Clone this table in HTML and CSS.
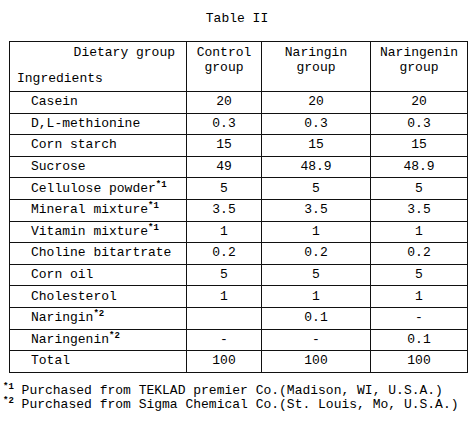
FILE: index.html
```html
<!DOCTYPE html>
<html lang="en">
  <head>
    <meta charset="UTF-8" />
    <meta name="viewport" content="width=device-width, initial-scale=1.0" />
    <title>Table II</title>
    <link rel="stylesheet" href="styles.css">
  </head>
  <body>
    <p class="title">Table II</p>
    <table class="diet">
      <colgroup>
        <col class="col-name" />
        <col class="col-control" />
        <col class="col-naringin" />
        <col class="col-naringenin" />
      </colgroup>
      <thead>
        <tr>
          <th class="corner">
            <span class="corner-top">Dietary group</span>
            <span class="corner-bottom">Ingredients</span>
          </th>
          <th>Control<br />group</th>
          <th>Naringin<br />group</th>
          <th>Naringenin<br />group</th>
        </tr>
      </thead>
      <tbody>
        <tr><td>Casein</td><td>20</td><td>20</td><td>20</td></tr>
        <tr><td>D,L-methionine</td><td>0.3</td><td>0.3</td><td>0.3</td></tr>
        <tr><td>Corn starch</td><td>15</td><td>15</td><td>15</td></tr>
        <tr><td>Sucrose</td><td>49</td><td>48.9</td><td>48.9</td></tr>
        <tr><td>Cellulose powder<sup class="mark">*1</sup></td><td>5</td><td>5</td><td>5</td></tr>
        <tr><td>Mineral mixture<sup class="mark">*1</sup></td><td>3.5</td><td>3.5</td><td>3.5</td></tr>
        <tr><td>Vitamin mixture<sup class="mark">*1</sup></td><td>1</td><td>1</td><td>1</td></tr>
        <tr><td>Choline bitartrate</td><td>0.2</td><td>0.2</td><td>0.2</td></tr>
        <tr><td>Corn oil</td><td>5</td><td>5</td><td>5</td></tr>
        <tr><td>Cholesterol</td><td>1</td><td>1</td><td>1</td></tr>
        <tr><td>Naringin<sup class="mark">*2</sup></td><td></td><td>0.1</td><td>-</td></tr>
        <tr><td>Naringenin<sup class="mark">*2</sup></td><td>-</td><td>-</td><td>0.1</td></tr>
        <tr class="total"><td>Total</td><td>100</td><td>100</td><td>100</td></tr>
      </tbody>
    </table>
    <div class="notes">
      <p><sup class="mark">*1</sup> Purchased from TEKLAD premier Co.(Madison, WI, U.S.A.)</p>
      <p><sup class="mark">*2</sup> Purchased from Sigma Chemical Co.(St. Louis, Mo, U.S.A.)</p>
    </div>
  </body>
</html>
```

FILE: styles.css
```css
body {
  margin: 0;
  font-family: "Liberation Mono", "Courier New", monospace;
  font-size: 13px;
  color: #000;
  background-color: #fff;
}
.title {
  margin: 0;
  height: 41px;
  padding-top: 11px;
  box-sizing: border-box;
  text-align: center;
  line-height: 16px;
}
.diet {
  margin-left: 9px;
  width: 458px;
  border-collapse: collapse;
  table-layout: fixed;
}
.col-name {
  width: 177px;
}
.col-control {
  width: 75px;
}
.col-naringin {
  width: 109px;
}
.col-naringenin {
  width: 97px;
}
.diet th,
.diet td {
  border: 1px solid #111;
  padding: 0;
}
.diet th {
  height: 46px;
  font-weight: normal;
  vertical-align: top;
  padding-top: 3px;
  line-height: 15px;
  text-align: center;
}
.corner-top {
  display: block;
  text-align: right;
  padding-right: 11px;
}
.corner-bottom {
  display: block;
  margin-top: 11px;
  padding-left: 7px;
  text-align: left;
}
.diet td {
  height: 20.6px;
  line-height: 14px;
  text-align: center;
}
.diet td:first-child {
  text-align: left;
  padding-left: 21px;
}
.mark {
  font-size: 9px;
  font-weight: bold;
  line-height: 0;
  vertical-align: 5px;
}
.notes {
  margin: 11px 0 0 3px;
  line-height: 14px;
}
.notes p {
  margin: 0;
}
```
